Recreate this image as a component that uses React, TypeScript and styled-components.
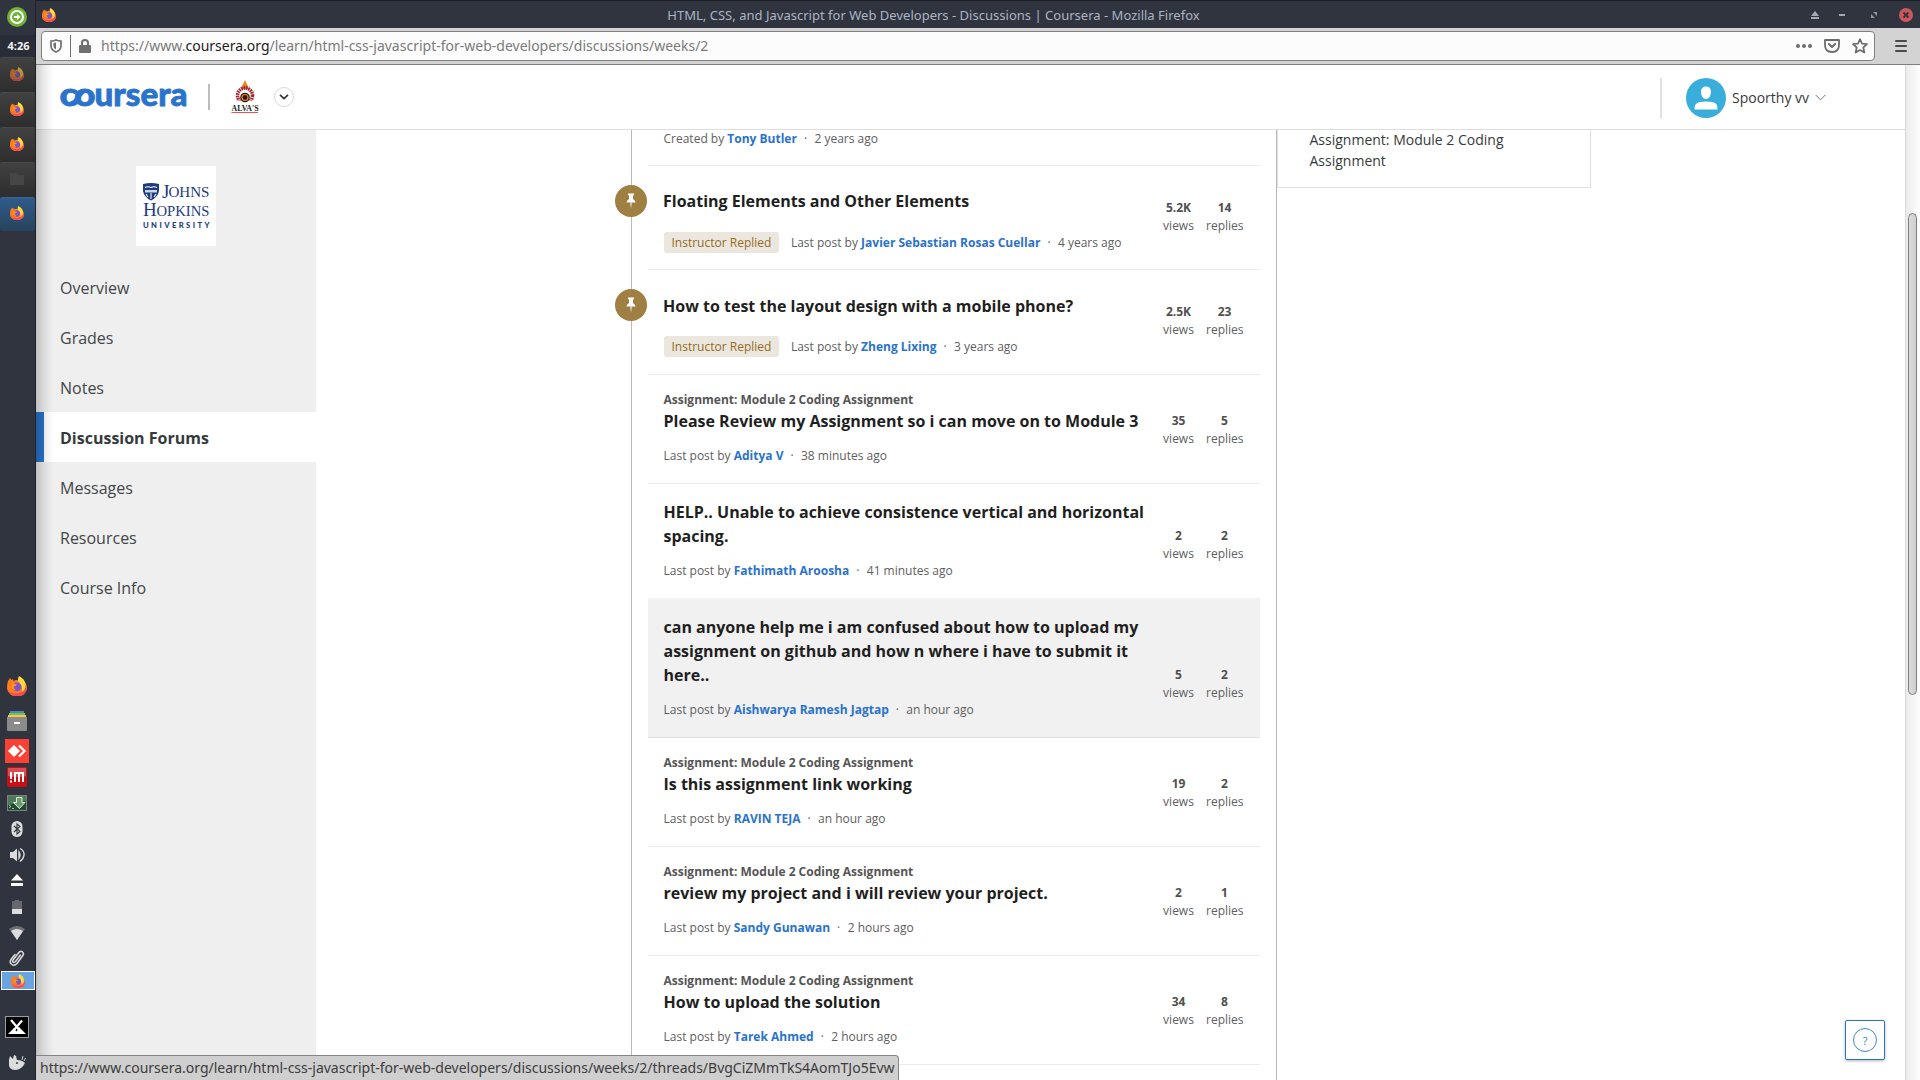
import React from 'react';
import styled, { createGlobalStyle, css } from 'styled-components';

const GlobalStyle = createGlobalStyle`
  * { box-sizing: border-box; }
  html, body { margin: 0; padding: 0; }
  body { width: 1920px; height: 1080px; overflow: hidden; background: #fff; }
`;

const ui = `'Noto Sans', 'Open Sans', sans-serif`;
const web = `'Open Sans', 'Noto Sans', sans-serif`;

const Desktop = styled.div`
  display: flex;
  width: 1920px;
  height: 1080px;
  overflow: hidden;
  font-family: ${web};
`;

/* ---------- desktop panel ---------- */

const Panel = styled.aside`
  flex: 0 0 36px;
  display: flex;
  flex-direction: column;
  background: #30343f;
  border-right: 1px solid #1f2229;
`;

const Slot = styled.div<{ $h: number }>`
  flex: 0 0 ${(p) => p.$h}px;
  min-height: 0;
  height: ${(p) => p.$h}px;
  display: flex;
  align-items: center;
  justify-content: center;
  padding: 0 1px 1px 0;
  svg { flex-shrink: 0; display: block; }
`;

const Clock = styled.div`
  flex: 0 0 22px;
  padding: 0 0 0 2px;
  background: #282d38;
  color: #f2f2f2;
  font: 700 11px/22px ${ui};
  text-align: center;
`;

const Task = styled.div<{ $state?: 'active' | 'dim' }>`
  flex: 0 0 ${(p) => (p.$state === 'active' ? 34 : 35)}px;
  display: flex;
  align-items: center;
  justify-content: center;
  padding: 0 1px 3px 0;
  border-radius: 3px;
  border-top: 1px solid ${(p) => (p.$state === 'active' ? '#3b6796' : '#494949')};
  background: ${(p) =>
    p.$state === 'active'
      ? 'linear-gradient(#2f5b8b, #28435c)'
      : 'linear-gradient(#414141, #2d2d2d)'};
  svg { opacity: ${(p) => (p.$state === 'dim' ? 0.6 : 1)}; display: block; }
`;

const Spacer = styled.div<{ $h: number }>`
  flex: 0 0 ${(p) => p.$h}px;
`;

const Pager = styled.div`
  flex: 0 0 19px;
  height: 19px;
  margin: 0 0 0 1px;
  display: flex;
  align-items: center;
  justify-content: center;
  background: #68a3e2;
  border: 1px solid #fff;
`;

/* ---------- browser window ---------- */

const Window = styled.div`
  flex: 1;
  display: flex;
  flex-direction: column;
  min-width: 0;
  position: relative;
`;

const TitleBar = styled.div`
  flex: 0 0 28px;
  display: grid;
  grid-template-columns: 120px 1fr 120px;
  align-items: center;
  background: #30343f;
  border-top: 1px solid #1d2027;
  padding-left: 6px;
`;

const WindowTitle = styled.div`
  color: #aab4c4;
  font: 13px/26px ${ui};
  letter-spacing: 0.015px;
  text-align: center;
  padding-right: 95px;
  white-space: nowrap;
`;

const Brand = styled.span`
  display: flex;
`;

const Toolbar = styled.div`
  flex: 0 0 37px;
  display: flex;
  align-items: flex-start;
  padding: 3px 12px 0 5px;
  background: #d3d3d3;
  border-bottom: 1px solid #7e7e7e;
`;

const AddressBar = styled.div`
  width: 1834px;
  height: 30px;
  display: flex;
  align-items: center;
  padding: 0 6px 0 8px;
  background: #fcfcfc;
  border: 1px solid #808080;
  border-radius: 4px;
`;

const BarDivider = styled.span`
  width: 1px;
  height: 22px;
  margin: 0 8px;
  background: #6c6c6c;
`;

const Url = styled.div`
  flex: 1;
  margin-left: 10px;
  padding-bottom: 1px;
  color: #7b7b7b;
  font: 14px/27px ${ui};
  b { font-weight: 400; color: #1c1c1c; }
`;

const BarIcons = styled.div`
  display: flex;
  align-items: center;
  gap: 12px;
  svg { display: block; }
`;

const MenuButton = styled.div`
  display: flex;
  width: 12px;
  height: 12px;
  margin: 9px 0 0 20px;
  flex-direction: column;
  justify-content: space-between;
  i { height: 2px; background: #4b4b4b; border-radius: 1px; }
`;

const Viewport = styled.div`
  flex: 1;
  display: flex;
  min-height: 0;
`;

const Page = styled.div`
  flex: 1;
  display: flex;
  flex-direction: column;
  min-width: 0;
  background: #fff;
`;

const ScrollTrack = styled.div`
  flex: 0 0 15px;
  padding: 148px 3px 0 2px;
  border-left: 1px solid #d9d9d9;
  background: linear-gradient(90deg, #ececec, #fdfdfd);
`;

const ScrollThumb = styled.div`
  height: 482px;
  border: 1px solid #7f7f7f;
  border-radius: 5px;
  background: linear-gradient(90deg, #dcdcdc, #cdcdcd);
`;

/* ---------- site header ---------- */

const Header = styled.header`
  flex: 0 0 65px;
  display: flex;
  align-items: center;
  padding: 0 0 0 22px;
  border-bottom: 1px solid #dedede;
`;

const HeaderDivider = styled.span<{ $tall?: boolean }>`
  width: 2px;
  height: ${(p) => (p.$tall ? 40 : 26)}px;
  background: ${(p) => (p.$tall ? '#e1e1e1' : '#bdbdbd')};
  margin: ${(p) => (p.$tall ? '1px 24px 0 auto' : '0 21px 0 19px')};
`;

const RoundButton = styled.span`
  display: flex;
  align-items: center;
  justify-content: center;
  width: 20px;
  height: 20px;
  margin-left: 15px;
  border: 1px solid #dadada;
  border-radius: 50%;
`;

const Account = styled.div`
  display: flex;
  align-items: center;
  width: 219px;
  padding-top: 1px;
  color: #373a3c;
  font-size: 14px;
  svg { display: block; }
  span { margin: 0 6px 0 6px; white-space: nowrap; }
`;

/* ---------- body ---------- */

const Body = styled.div`
  flex: 1;
  display: flex;
  align-items: stretch;
  min-height: 0;
  overflow: hidden;
`;

const SideNav = styled.nav`
  flex: 0 0 280px;
  padding-top: 36px;
  background: #efefef;
`;

const School = styled.div`
  width: 80px;
  height: 80px;
  margin: 0 0 16px 100px;
  background: #fff;
  svg { display: block; }
`;

const NavItem = styled.a<{ $active?: boolean }>`
  display: block;
  height: 50px;
  padding-left: 24px;
  color: #424648;
  font-size: 16px;
  line-height: 52px;
  ${(p) =>
    p.$active &&
    css`
      background: #fff;
      border-left: 8px solid #2a73cc;
      padding-left: 16px;
      font-weight: 700;
      color: #373a3c;
    `}
`;

const Threads = styled.main`
  flex: 0 0 646px;
  margin-left: 315px;
  padding: 0 16px;
  border-left: 1px solid #b9b9b9;
  border-right: 1px solid #b9b9b9;
`;

const Row = styled.article<{ $hover?: boolean; $softEdge?: boolean; $pad?: number }>`
  display: flex;
  justify-content: space-between;
  align-items: flex-end;
  padding: ${(p) => p.$pad ?? 16}px 17px 18px 15.5px;
  background: ${(p) => (p.$hover ? '#f1f1f1' : '#fff')};
  border-bottom: 1px solid ${(p) => (p.$hover ? '#dfdfdf' : p.$softEdge ? '#f1f1f1' : '#ececec')};
`;

const Copy = styled.div<{ $lift?: number }>`
  position: relative;
  width: 490px;
  margin-bottom: ${(p) => p.$lift ?? 0}px;
`;

const Label = styled.div`
  color: #555;
  font-size: 12px;
  font-weight: 700;
  line-height: 18px;
`;

const Title = styled.h3<{ $pinned?: boolean }>`
  margin: 0 0 0 ${(p) => (p.$pinned ? -0.5 : 0)}px;
  color: #1f1f1f;
  font-size: 16px;
  font-weight: 700;
  line-height: 24px;
  white-space: pre-line;
`;

const Meta = styled.div<{ $pinned?: boolean; $gap?: number }>`
  display: flex;
  align-items: center;
  margin-top: ${(p) => p.$gap ?? 14}px;
  color: #5e5e5e;
  font-size: 12px;
  line-height: ${(p) => (p.$pinned ? 21 : 18)}px;
  white-space: pre;
  b { color: #2a73cc; font-weight: 700; }
`;

const Dot = styled.span`
  margin: 0 7.4px 0 7px;
`;

const Tag = styled.span`
  height: 21px;
  padding: 0 8px;
  margin-right: 11.5px;
  border-radius: 3px;
  background: #ebe7df;
  color: #946b1c;
  line-height: 21px;
`;

const Pin = styled.span<{ $top: number }>`
  position: absolute;
  left: -48.5px;
  top: ${(p) => p.$top}px;
  width: 32px;
  height: 32px;
  border-radius: 50%;
  background: #a07f42;
  display: flex;
  align-items: center;
  justify-content: center;
`;

const Stats = styled.div<{ $low?: boolean }>`
  display: flex;
  margin: 0 0 ${(p) => (p.$low ? 16 : 17)}px;
  gap: 9px;
`;

const Stat = styled.div`
  width: 37px;
  color: #5e5e5e;
  font-size: 12px;
  line-height: 18px;
  text-align: center;
  b { display: block; color: #505050; }
`;

const Aside = styled.aside`
  width: 314px;
  height: 58px;
  padding-left: 31.5px;
  border: 1px solid #e1e1e1;
  border-top: 0;
  color: #373a3c;
  font-size: 14px;
  line-height: 21px;
  p { margin: -1px 0 0; }
`;

const EdgeShade = styled.div`
  position: absolute;
  left: 0;
  top: 65px;
  bottom: 0;
  width: 18px;
  pointer-events: none;
  background: linear-gradient(90deg, rgba(0, 0, 0, 0.2), rgba(0, 0, 0, 0.1) 35%, rgba(0, 0, 0, 0.03) 75%, transparent);
`;

const StatusTip = styled.div`
  position: absolute;
  left: 0;
  bottom: 0;
  width: 863px;
  height: 25px;
  padding-left: 4px;
  background: #cfcfcf;
  border: 1px solid #858585;
  border-left: 0;
  border-bottom: 0;
  border-top-right-radius: 4px;
  color: #3c3c3c;
  font: 14px/23px ${ui};
  white-space: nowrap;
`;

const HelpButton = styled.div`
  position: absolute;
  right: 35px;
  bottom: 20px;
  width: 40px;
  height: 40px;
  display: flex;
  align-items: center;
  justify-content: center;
  background: #fff;
  border: 1px solid #2a73cc;
  border-radius: 2px;
  box-shadow: 0 1px 3px rgba(0, 0, 0, 0.3);
  span {
    width: 24px;
    height: 24px;
    border: 1px solid #3c85d8;
    border-radius: 50%;
    color: #3c85d8;
    font-size: 11px;
    line-height: 23px;
    text-align: center;
  }
`;

/* ---------- drawings ---------- */

const Firefox = ({ size = 14 }: { size?: number }) => (
  <svg width={size} height={size} viewBox="0 0 20 20">
    <path d="M1 5 Q2 4 3 2 L4.5 4 L6 3 L6.5 5 Q10 3 12 5 L18 6 Q20 9 20 12 A10 8.5 0 0 1 0 12 Q0 8 1 5Z" fill="#ff7e1c" />
    <path d="M1 14 Q4 18 10 17.5 Q18 16.5 19.8 9 Q21 20 10 20 Q3 20 1 14Z" fill="#f24a5c" />
    <path d="M12 0 Q18 3 18.3 8 Q19 13 15 16 Q16 9 11 5 Q10.500 2 12 0Z" fill="#ffdc3c" />
    <circle cx="10" cy="10.800" r="4.400" fill="#7a55cf" />
    <path d="M4 7 L10 8.400 Q9 10.500 6.500 10.500 Q7 13 9 14.500 Q4 14 4 7Z" fill="#ff9524" />
  </svg>
);

const CourseraLogo = () => (
  <svg width="131" height="60" viewBox="-2 -15 131 60">
    <g fill="#2a73cc" stroke="#2a73cc" strokeWidth="0.800" fontFamily="Lato, 'Open Sans', sans-serif" fontWeight="900" fontSize="33">
      <text x="-0.500" y="23.800" textLength="18.500" lengthAdjust="spacingAndGlyphs">c</text>
      <text x="14" y="23.800" textLength="21.500" lengthAdjust="spacingAndGlyphs">o</text>
      <path d="M10.500 22 Q15 21 17.500 16.500 T24 8.500" fill="none" strokeWidth="4.600" />
      <text x="34.500" y="23.800" textLength="93" lengthAdjust="spacingAndGlyphs">ursera</text>
    </g>
  </svg>
);

const Alvas = () => (
  <svg width="28" height="34" viewBox="0 0 28 34">
    <path d="M14 0 L17.500 7 H10.500Z" fill="#e98a2c" />
    <path d="M14 4 L18 9 H10Z" fill="#e0752f" />
    <circle cx="14" cy="15.500" r="7.500" fill="none" stroke="#a82630" strokeWidth="3.600" strokeDasharray="1.700 0.700" />
    <path d="M3 25 L8 20.500 H20 L25 25Z" fill="#fff" />
    <circle cx="14" cy="17.500" r="4.800" fill="#2b1710" />
    <circle cx="14" cy="17.500" r="3" fill="none" stroke="#e98a2c" strokeWidth="1.200" />
    <text x="0.500" y="30.500" fontFamily="'Liberation Serif', serif" fontWeight="700" fontSize="8" fill="#222" textLength="27" lengthAdjust="spacingAndGlyphs">ALVA'S</text>
    <path d="M0.500 32.500 H27" stroke="#e4574f" strokeWidth="1" />
  </svg>
);

const Hopkins = () => (
  <svg width="80" height="80" viewBox="0 0 80 80">
    <path d="M7 18 Q15 16 23 18 V25 Q22 31 15 34.500 Q8 31 7 25Z" fill="#1d3b7d" />
    <path d="M9 21.500 Q12 20 15 21.500 Q18 20 21 21.500 M15 27 V33 M10 28 L12 31 M20 28 L18 31" stroke="#fff" strokeWidth="1.100" fill="none" />
    <path d="M9 24 H21 V26.500 H9Z" fill="#cfd8ea" />
    <g fill="#1d3b7d" fontFamily="'Liberation Serif', serif">
      <text x="26" y="32" fontSize="19">J</text>
      <text x="32.500" y="31" fontSize="15.500" textLength="41" lengthAdjust="spacingAndGlyphs">OHNS</text>
      <text x="7" y="50" fontSize="19">H</text>
      <text x="20.500" y="50" fontSize="15.500" textLength="53" lengthAdjust="spacingAndGlyphs">OPKINS</text>
      <text x="7" y="61.500" fontSize="7.600" fontFamily="Lato, sans-serif" fontWeight="900" textLength="66.500">UNIVERSITY</text>
    </g>
  </svg>
);

const PinGlyph = () => (
  <svg width="10" height="16" viewBox="0 0 10 16" fill="#fff">
    <path d="M2 0.500 H8 V2 L7 2.500 V6 Q9.500 7.500 9.500 9.500 H0.500 Q0.500 7.500 3 6 V2.500 L2 2Z" />
    <path d="M4.300 9.500 H5.700 L5 15.500Z" />
  </svg>
);

const tray = '#dcdcdc';

const TrayIcons = () => (
  <>
    <Slot $h={32}><Firefox size={20} /></Slot>
    <Slot $h={38}>
      <svg width="20" height="20" viewBox="0 0 20 20">
        <path d="M3 0H17V3H3Z" fill="#4a86cf" /><path d="M2 2H18V5H2Z" fill="#7cc242" /><path d="M1 4H19V7H1Z" fill="#f7c64a" />
        <path d="M0 6H20V19Q20 20 19 20H1Q0 20 0 19Z" fill="#8b8b8b" /><path d="M7 11H13V13H7Z" fill="#fff" />
      </svg>
    </Slot>
    <Slot $h={22}>
      <svg width="24" height="24" viewBox="0 0 24 24">
        <path d="M0 0H24V24H0Z" fill="#fb4136" /><path d="M3 12L9 6L15 12L9 18Z" fill="#fff" />
        <path d="M14 6.500L19.500 12L14 17.500" fill="none" stroke="#fff" strokeWidth="2.200" />
      </svg>
    </Slot>
    <Slot $h={30}>
      <svg width="20" height="20" viewBox="0 0 20 20">
        <rect width="20" height="20" rx="2" fill="#cb0d16" /><path d="M1 1H19V9Q10 11 1 9Z" fill="#dd4a50" />
        <path d="M4 5V12M4 13.500V15.500M8 15V6H16V15M12 6V15" stroke="#fff" strokeWidth="2" fill="none" />
      </svg>
    </Slot>
    <Slot $h={22}>
      <svg width="20" height="16" viewBox="0 0 20 16">
        <rect x="0.500" y="0.500" width="19" height="15" fill="#214a2e" stroke="#808080" /><path d="M1 1H19V6L1 10Z" fill="#4a7a57" />
        <path d="M9.500 2.500H15V7.500H18L12.300 13.500L6.500 7.500H9.500Z" fill="#6d9a72" stroke="#e3efd9" /><path d="M2 10L4 11.500L2 13M5 13.500H7" stroke="#c8dcc6" fill="none" strokeWidth="0.800" />
      </svg>
    </Slot>
    <Slot $h={30}>
      <svg width="12" height="16" viewBox="0 0 12 16">
        <rect x="0.500" width="11" height="16" rx="5.500" fill={tray} /><path d="M3 5L9 10.500L6 13V3L9 5.500L3 11" stroke="#30343f" fill="none" strokeWidth="1.100" />
      </svg>
    </Slot>
    <Slot $h={22}>
      <svg width="16" height="16" viewBox="0 0 16 16">
        <path d="M1 5H4L8 1.500V14.500L4 11H1Z" fill={tray} /><path d="M10 5Q12 8 10 11ZM11 1.500Q15.500 4 15 8T11 14.500" stroke={tray} fill="none" strokeWidth="1.400" />
      </svg>
    </Slot>
    <Slot $h={28}>
      <svg width="12" height="12" viewBox="0 0 12 12" fill="#fff"><path d="M6 0L12 6.500H0ZM0 9H12V12H0Z" /></svg>
    </Slot>
    <Slot $h={26}>
      <svg width="10" height="14" viewBox="0 0 10 14"><path d="M3 0H7V1H10V14H0V1H3Z" fill="#65686f" /><path d="M0 9H10V14H0Z" fill={tray} /></svg>
    </Slot>
    <Slot $h={26}>
      <svg width="16" height="14" viewBox="0 0 16 14"><path d="M0 3Q8-3 16 3L8 14Z" fill="#6c6f76" /><path d="M2 5Q8 1 14 5L8 14Z" fill={tray} /></svg>
    </Slot>
    <Slot $h={25}>
      <svg width="16" height="16" viewBox="0 0 16 16" fill="none" stroke={tray} strokeWidth="1.500" strokeLinecap="round">
        <path d="M11.500 5L6.500 11.500Q5 13 4 12T4.500 9.500L9.500 3Q11.500 0.300 13.500 2T13.500 6L8 13.500Q5.500 16.300 2.800 14.500T2 9.500L6 4.500" />
      </svg>
    </Slot>
  </>
);

/* ---------- data ---------- */

type Thread = {
  title: string;
  label?: string;
  by: string;
  when: string;
  views: string;
  replies: string;
  pinned?: boolean;
  hover?: boolean;
  softEdge?: boolean;
  pad?: number;
  gap?: number;
  lift?: number;
  pinTop?: number;
};

const assignment = 'Assignment: Module 2 Coding Assignment';

const threads: Thread[] = [
  { title: 'Floating Elements and Other Elements', by: 'Javier Sebastian Rosas Cuellar', when: '4 years ago', views: '5.2K', replies: '14', pinned: true, pad: 23, gap: 19, lift: -2, pinTop: -4 },
  { title: 'How to test the layout design with a mobile phone?', by: 'Zheng Lixing', when: '3 years ago', views: '2.5K', replies: '23', pinned: true, pad: 24, gap: 18, lift: -1, pinTop: -5 },
  { label: assignment, title: 'Please Review my Assignment so i can move on to Module 3', by: 'Aditya V', when: '38 minutes ago', views: '35', replies: '5' },
  { title: 'HELP.. Unable to achieve consistence vertical and horizontal\nspacing.', by: 'Fathimath Aroosha', when: '41 minutes ago', views: '2', replies: '2', softEdge: true },
  { title: 'can anyone help me i am confused about how to upload my\nassignment on github and how n where i have to submit it\nhere..', by: 'Aishwarya Ramesh Jagtap', when: 'an hour ago', views: '5', replies: '2', hover: true },
  { label: assignment, title: 'Is this assignment link working', by: 'RAVIN TEJA', when: 'an hour ago', views: '19', replies: '2' },
  { label: assignment, title: 'review my project and i will review your project.', by: 'Sandy Gunawan', when: '2 hours ago', views: '2', replies: '1' },
  { label: assignment, title: 'How to upload the solution', by: 'Tarek Ahmed', when: '2 hours ago', views: '34', replies: '8' },
];

const FirstRow = styled.div`
  height: 36px;
  padding-left: 15.5px;
  border-bottom: 1px solid #ececec;
`;

const ThreadRow = ({ t }: { t: Thread }) => (
  <Row $hover={t.hover} $softEdge={t.softEdge} $pad={t.pad}>
    <Copy $lift={t.lift}>
      {t.pinned && <Pin $top={t.pinTop ?? -4}><PinGlyph /></Pin>}
      {t.label && <Label>{t.label}</Label>}
      <Title $pinned={t.pinned}>{t.title}</Title>
      <Meta $pinned={t.pinned} $gap={t.gap}>
        {t.pinned && <Tag>Instructor Replied</Tag>}
        <span>Last post by <b>{t.by}</b><Dot>·</Dot>{t.when}</span>
      </Meta>
    </Copy>
    <Stats $low={t.pinTop === -4}>
      <Stat><b>{t.views}</b>views</Stat>
      <Stat><b>{t.replies}</b>replies</Stat>
    </Stats>
  </Row>
);

const nav = ['Overview', 'Grades', 'Notes', 'Discussion Forums', 'Messages', 'Resources', 'Course Info'];

export default function App() {
  return (
    <>
      <GlobalStyle />
      <Desktop>
        <Panel>
          <Slot $h={35}>
            <svg width="20" height="20" viewBox="0 0 20 20">
              <circle cx="10" cy="10" r="10" fill="#6fb434" />
              <circle cx="10" cy="10" r="6" fill="none" stroke="#fff" strokeWidth="2" />
              <path d="M7 9H10V7L13.500 10L10 13V11H7Z" fill="#fff" />
            </svg>
          </Slot>
          <Clock>4:26</Clock>
          <Task $state="dim"><Firefox /></Task>
          <Task><Firefox /></Task>
          <Task><Firefox /></Task>
          <Task>
            <svg width="14" height="14" viewBox="0 0 14 14"><path d="M0 1H6L8 3H14V13H0Z" fill="#464646" /></svg>
          </Task>
          <Task $state="active"><Firefox /></Task>
          <Spacer $h={439} />
          <TrayIcons />
          <Pager><Firefox /></Pager>
          <Spacer $h={26} />
          <Slot $h={22}>
            <svg width="24" height="22" viewBox="0 0 24 22">
              <rect x="0.500" y="0.500" width="23" height="21" fill="#000" stroke="#9b9b9b" />
              <path d="M3 18L9 12L13 18ZM10 18L14 11L21 18Z" fill="#fff" />
              <path d="M6 4L17 17M17 4.500L9 14" stroke="#fff" strokeWidth="2.200" />
            </svg>
          </Slot>
          <Spacer $h={11} />
          <Slot $h={28}>
            <svg width="18" height="16" viewBox="0 0 18 16">
              <path d="M1 5L2 1L5 4L6 0L8 1L9 5Q14 5 17 8Q14 14 8 15Q1 15 1 10Z" fill={tray} />
              <circle cx="9" cy="8" r="1" fill="#30343f" />
              <path d="M14 5L15 1M16 6L17.500 3" stroke={tray} strokeWidth="0.900" />
            </svg>
          </Slot>
        </Panel>

        <Window>
          <TitleBar>
            <Brand><Firefox /></Brand>
            <WindowTitle>HTML, CSS, and Javascript for Web Developers - Discussions | Coursera - Mozilla Firefox</WindowTitle>
            <svg width="120" height="16" viewBox="0 0 120 16">
              <path d="M15 4L19 9H11ZM11 10H19V12H11Z" fill="#a3aab8" />
              <path d="M39 7H45V9H39Z" fill="#a3aab8" />
              <path d="M73 5H77V9ZM71 7V11H75Z" fill="#8d94a2" />
              <circle cx="106" cy="8" r="7" fill="#d0565d" />
              <path d="M103.500 5.500L108.500 10.500M108.500 5.500L103.500 10.500" stroke="#30343f" strokeWidth="1.800" />
            </svg>
          </TitleBar>

          <Toolbar>
            <AddressBar>
              <svg width="12" height="14" viewBox="0 0 12 14">
                <path d="M6 1Q8 2 11 2V7Q11 11 6 13Q1 11 1 7V2Q4 2 6 1Z" fill="none" stroke="#6f6f6f" strokeWidth="1.700" />
                <path d="M6 3.500V10.500Q3.500 9 3.500 7V4Z" fill="#6f6f6f" />
              </svg>
              <BarDivider />
              <svg width="12" height="14" viewBox="0 0 12 14">
                <path d="M3 7V4Q3 1 6 1T9 4V7" fill="none" stroke="#6f6f6f" strokeWidth="2" />
                <rect y="6" width="12" height="8" rx="1" fill="#6f6f6f" />
              </svg>
              <Url>https://www.<b>coursera.org</b>/learn/html-css-javascript-for-web-developers/discussions/weeks/2</Url>
              <BarIcons>
                <svg width="16" height="16" viewBox="0 0 16 16" fill="#6c6c6c"><circle cx="2" cy="8" r="2" /><circle cx="8" cy="8" r="2" /><circle cx="14" cy="8" r="2" /></svg>
                <svg width="16" height="16" viewBox="0 0 16 16" fill="none" stroke="#6c6c6c" strokeWidth="1.800" strokeLinejoin="round" strokeLinecap="round">
                  <path d="M1 2H15V7Q15 14 8 14T1 7Z" /><path d="M4.800 6L8 9L11.200 6" strokeWidth="2" />
                </svg>
                <svg width="16" height="16" viewBox="0 0 16 16" fill="none" stroke="#6c6c6c" strokeWidth="1.700" strokeLinejoin="round">
                  <path d="M8 1.200L10 5.700L15 6.200L11.300 9.500L12.400 14.500L8 12L3.600 14.500L4.700 9.500L1 6.200L6 5.700Z" />
                </svg>
              </BarIcons>
            </AddressBar>
            <MenuButton><i /><i /><i /></MenuButton>
          </Toolbar>

          <Viewport>
            <Page>
              <Header>
                <CourseraLogo />
                <HeaderDivider />
                <Alvas />
                <RoundButton>
                  <svg width="10" height="6" viewBox="0 0 10 6" fill="none" stroke="#333" strokeWidth="1.700"><path d="M1 0.800L5 4.600L9 0.800" /></svg>
                </RoundButton>
                <HeaderDivider $tall />
                <Account>
                  <svg width="40" height="40" viewBox="0 0 40 40">
                    <circle cx="20" cy="20" r="20" fill="#3aaedb" />
                    <path d="M20 8.500Q25 8.500 25 14Q24.500 21 20 21T15 14Q15 8.500 20 8.500ZM8.500 31.500Q8 24.500 14 24Q20 23 26 24Q32 24.500 31.500 31.500Z" fill="#fff" />
                  </svg>
                  <span>Spoorthy vv</span>
                  <svg width="11" height="7" viewBox="0 0 11 7" fill="none" stroke="#777" strokeWidth="1"><path d="M0.500 0.800L5.500 5.800L10.500 0.800" /></svg>
                </Account>
              </Header>

              <Body>
                <SideNav>
                  <School><Hopkins /></School>
                  {nav.map((n) => (
                    <NavItem key={n} $active={n === 'Discussion Forums'}>{n}</NavItem>
                  ))}
                </SideNav>
                <Threads>
                  <FirstRow>
                    <Meta $gap={0}><span>Created by <b>Tony Butler</b><Dot>·</Dot>2 years ago</span></Meta>
                  </FirstRow>
                  {threads.map((t) => <ThreadRow key={t.title} t={t} />)}
                </Threads>
                <Aside><p>Assignment: Module 2 Coding<br />Assignment</p></Aside>
              </Body>
            </Page>
            <ScrollTrack><ScrollThumb /></ScrollTrack>
          </Viewport>

          <EdgeShade />
          <StatusTip>https://www.coursera.org/learn/html-css-javascript-for-web-developers/discussions/weeks/2/threads/BvgCiZMmTkS4AomTJo5Evw</StatusTip>
          <HelpButton><span>?</span></HelpButton>
        </Window>
      </Desktop>
    </>
  );
}
